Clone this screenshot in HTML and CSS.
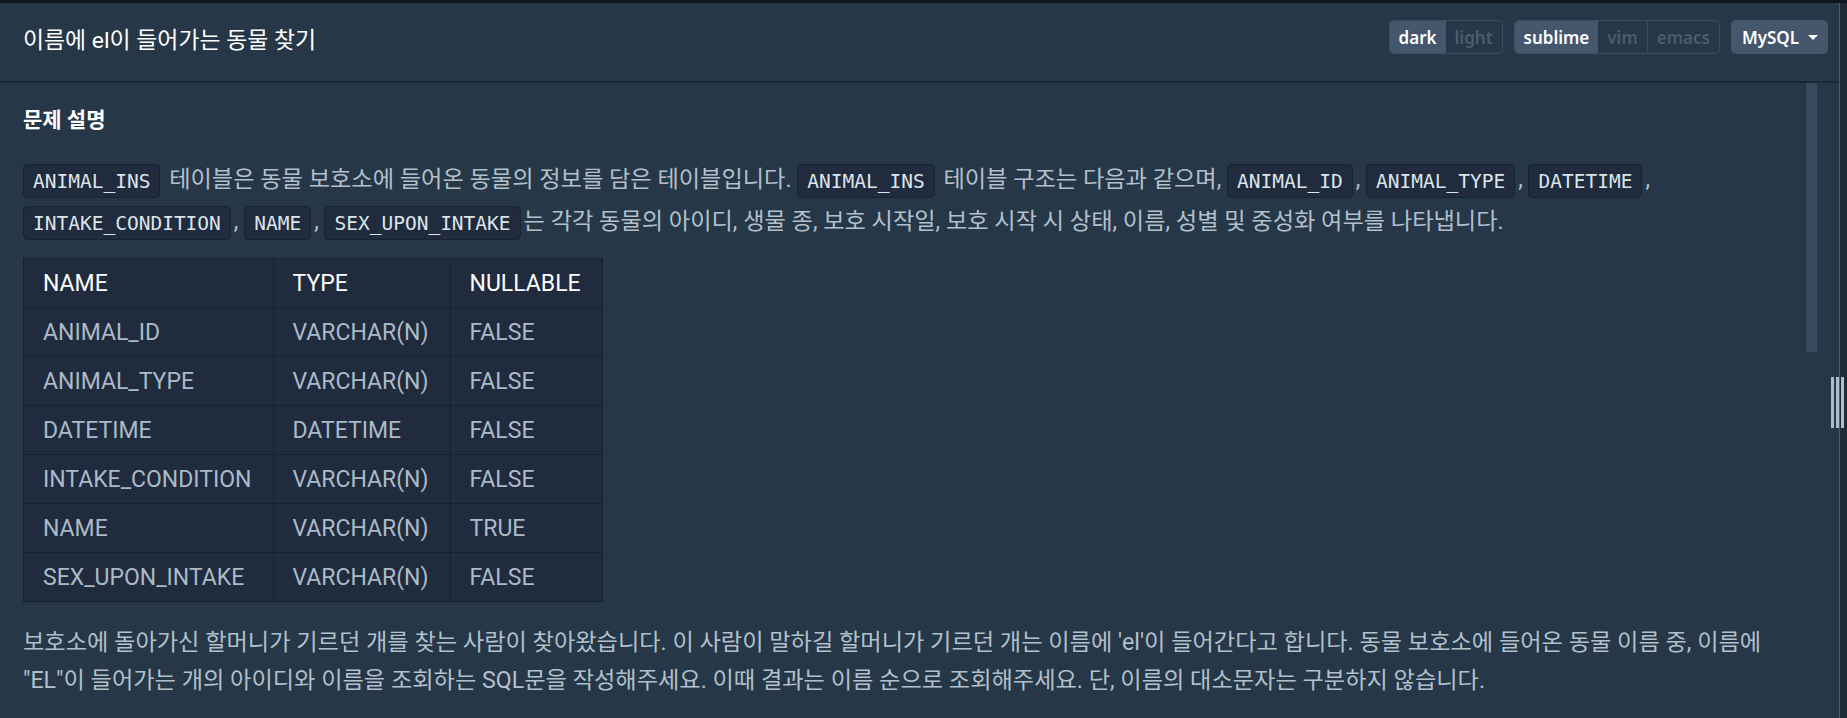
FILE: index.html
```html
<!DOCTYPE html>
<html lang="ko">
<head>
<meta charset="utf-8">
<title>이름에 el이 들어가는 동물 찾기</title>
<link rel="stylesheet" href="styles.css">
</head>
<body>
<div class="topbar"></div>
<div class="app">
  <div class="panel">
    <header class="head">
      <h1 class="title">이름에 el이 들어가는 동물 찾기</h1>
      <div class="controls">
        <div class="seg">
          <span class="seg-item active">dark</span><span class="seg-item">light</span>
        </div>
        <div class="seg">
          <span class="seg-item active">sublime</span><span class="seg-item">vim</span><span class="seg-item sep">emacs</span>
        </div>
        <div class="select">MySQL<span class="caret"></span></div>
      </div>
    </header>
    <div class="content">
      <div class="desc">
        <h5 class="sec-title">문제 설명</h5>
        <p class="para codes"><code class="code">ANIMAL_INS</code> 테이블은 동물 보호소에 들어온 동물의 정보를 담은 테이블입니다. <code class="code">ANIMAL_INS</code> 테이블 구조는 다음과 같으며, <code class="code">ANIMAL_ID</code>, <code class="code">ANIMAL_TYPE</code>, <code class="code">DATETIME</code>, <code class="code">INTAKE_CONDITION</code>, <code class="code">NAME</code>, <code class="code">SEX_UPON_INTAKE</code>는 각각 동물의 아이디, 생물 종, 보호 시작일, 보호 시작 시 상태, 이름, 성별 및 중성화 여부를 나타냅니다.</p>
        <table class="schema">
          <thead>
            <tr><th>NAME</th><th>TYPE</th><th>NULLABLE</th></tr>
          </thead>
          <tbody>
            <tr><td>ANIMAL_ID</td><td>VARCHAR(N)</td><td>FALSE</td></tr>
            <tr><td>ANIMAL_TYPE</td><td>VARCHAR(N)</td><td>FALSE</td></tr>
            <tr><td>DATETIME</td><td>DATETIME</td><td>FALSE</td></tr>
            <tr><td>INTAKE_CONDITION</td><td>VARCHAR(N)</td><td>FALSE</td></tr>
            <tr><td>NAME</td><td>VARCHAR(N)</td><td>TRUE</td></tr>
            <tr><td>SEX_UPON_INTAKE</td><td>VARCHAR(N)</td><td>FALSE</td></tr>
          </tbody>
        </table>
        <p class="para">보호소에 돌아가신 할머니가 기르던 개를 찾는 사람이 찾아왔습니다. 이 사람이 말하길 할머니가 기르던 개는 이름에 'el'이 들어간다고 합니다. 동물 보호소에 들어온 동물 이름 중, 이름에 "EL"이 들어가는 개의 아이디와 이름을 조회하는 SQL문을 작성해주세요. 이때 결과는 이름 순으로 조회해주세요. 단, 이름의 대소문자는 구분하지 않습니다.</p>
      </div>
      <div class="track"><div class="thumb"></div></div>
    </div>
  </div>
  <div class="gutter">
    <div class="handle"><span class="bar"></span><span class="bar"></span><span class="bar"></span></div>
  </div>
</div>
</body>
</html>
```
FILE: styles.css
```css
* { box-sizing: border-box; }
html, body { margin: 0; padding: 0; }
body {
  width: 1847px;
  height: 718px;
  overflow: hidden;
  background: #263747;
  font-family: "Roboto", "Noto Sans CJK KR", sans-serif;
  color: #b2c0cc;
}
.topbar { height: 3px; background: #0e151e; }
.app { display: flex; height: 715px; }
.panel { flex: 1; display: flex; flex-direction: column; min-width: 0; }
.head {
  height: 80px;
  display: flex;
  justify-content: space-between;
  align-items: flex-start;
  padding: 17px 11px 0 23px;
  border-bottom: 2px solid #1c2736;
}
.title {
  margin: 4px 0 0;
  font-size: 22.9px;
  line-height: 34px;
  font-weight: 400;
  color: #ffffff;
  font-family: "Roboto", "Noto Sans CJK KR", sans-serif;
}
.controls { display: flex; gap: 11px; }
.seg {
  display: flex;
  height: 34px;
  border: 1px solid #3c4c60;
  border-radius: 5px;
  overflow: hidden;
}
.seg-item {
  display: flex;
  align-items: center;
  padding: 0 9px;
  font-family: "Noto Sans", sans-serif;
  font-size: 17px;
  font-weight: 600;
  color: #4c5c6f;
}
.seg-item.active { background: #44576c; color: #ffffff; }
.seg-item.sep { border-left: 1px solid #3c4c60; }
.select {
  display: flex;
  align-items: center;
  height: 34px;
  padding: 0 10px 0 11px;
  border-radius: 5px;
  background: #44576c;
  color: #ffffff;
  font-family: "Noto Sans", sans-serif;
  font-size: 17px;
  font-weight: 600;
}
.caret {
  margin-left: 9px;
  width: 0;
  height: 0;
  border-left: 5px solid transparent;
  border-right: 5px solid transparent;
  border-top: 5px solid #ffffff;
}
.content { flex: 1; display: flex; min-height: 0; }
.desc { flex: 1; padding: 24px 0 0 23px; min-width: 0; }
.sec-title {
  margin: 0 0 26px;
  font-size: 21px;
  line-height: 26px;
  font-weight: 700;
  color: #ffffff;
}
.para {
  margin: 0;
  font-size: 23.2px;
  line-height: 38px;
  color: #b2c0cc;
}
.para.codes { line-height: 40px; margin-bottom: 15px; }
.code {
  font-family: "DejaVu Sans Mono", monospace;
  font-size: 19.5px;
  color: #dde4ea;
  background: #202b3d;
  border: 1px solid #19222f;
  border-radius: 5px;
  padding: 4.5px 9px;
  margin: 0 3px 0 0;
}
.schema {
  border-collapse: collapse;
  border: 1px solid #172030;
  margin-bottom: 21px;
  font-size: 23px;
}
.schema th, .schema td {
  height: 49px;
  padding: 0 21px 0 19px;
  text-align: left;
  background: #202b3d;
  border: 1px solid #172030;
  white-space: nowrap;
}
.schema th { color: #ffffff; font-weight: 400; }
.schema td { color: #abbac8; }
.track { width: 11px; margin-right: 22px; }
.thumb { height: 269px; background: #394a5e; }
.gutter {
  position: relative;
  width: 8px;
  border-left: 1px solid #4d5d6e;
  background: #1f2a38;
}
.handle {
  position: absolute;
  left: -9px;
  top: 374px;
  display: flex;
  gap: 2px;
}
.bar { width: 3px; height: 51px; background: #adbcca; }
```
